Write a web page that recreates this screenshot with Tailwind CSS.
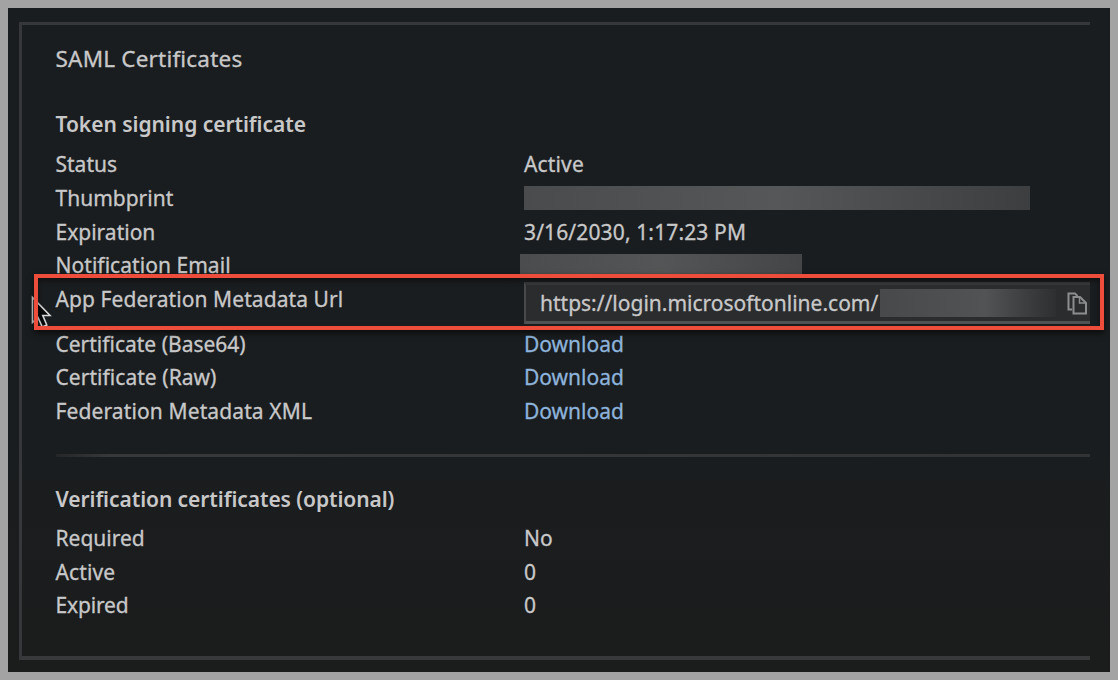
<!DOCTYPE html>
<html lang="en">
<head>
<meta charset="utf-8">
<title>SAML Certificates</title>
<script src="https://cdn.jsdelivr.net/npm/@tailwindcss/browser@4"></script>
</head>
<body class="w-[1118px] h-[680px] overflow-hidden bg-[#a3a3a3] p-2 font-['Noto_Sans','Open_Sans',sans-serif] text-[21px] text-[#c8c8c9] [-webkit-text-stroke:0.3px]">
<main class="relative h-[664px] w-[1102px] bg-linear-to-b from-[#1a1d1f] from-65% to-[#1b1c1c] pt-[14px] pl-[11px] pr-5">
  <section class="flex h-[638px] flex-col border-t-[3px] border-l-[3px] border-b-4 border-t-[#35373b] border-l-[#35373a] border-b-[#38393a] pl-[33.5px]">
    <h1 class="mt-[15px] h-[38px] text-[22.5px] leading-[38px] tracking-[0.2px]">SAML Certificates</h1>
    <h2 class="mt-[31px] h-[30px] text-[21px] font-semibold leading-[30px] tracking-[-0.04px] [-webkit-text-stroke:0px]">Token signing certificate</h2>

    <dl class="mt-[8px] grid grid-cols-[468.5px_1fr] grid-rows-[33.75px_33.75px_33.75px_33.75px_44.5px_33.75px_33.75px_33.75px] leading-[34.5px]">
      <dt>Status</dt><dd class="tracking-[0.15px]">Active</dd>
      <dt>Thumbprint</dt>
      <dd class="pt-[5px]"><div class="h-6 w-[506px] bg-linear-to-r from-[#4a4b4c] via-[#565758] to-[#3c3e40]"></div></dd>
      <dt>Expiration</dt><dd class="tracking-[0.13px]">3/16/2030, 1:17:23 PM</dd>
      <dt class="tracking-[0.05px]">Notification Email</dt>
      <dd class="pt-[6px]"><div class="-ml-1 h-6 w-[282px] bg-linear-to-r from-[#4b4c4d] via-[#545556] to-[#434546]"></div></dd>
      <dt class="tracking-[0.08px]">App Federation Metadata Url</dt>
      <dd class="flex h-[42px] items-center border-t-[3px] border-b-[3px] border-l-2 border-t-[#37383a] border-b-[#505152] border-l-[#48494a] bg-[#2b2c2e] pl-[14px]">
        <span class="w-[340px] overflow-hidden whitespace-nowrap">https://login.microsoftonline.com/</span>
        <span class="h-7 w-[176px] bg-linear-to-r from-[#48494a] via-[#525354] via-60% to-[#2e2f31]"></span>
        <svg class="ml-[9px] h-6 w-6" viewBox="0 0 24 24" fill="none" stroke="#8c8d8e" stroke-width="2" stroke-linejoin="miter">
          <path d="M7 18.5H3.5V2.5H10L12.5 5"/>
          <path d="M8.5 6H15L21 12V22.5H8.5Z"/>
          <path d="M14.5 6V12H20.5" stroke-width="1.5"/>
        </svg>
      </dd>
      <dt>Certificate (Base64)</dt><dd><a class="text-[#8db3db]">Download</a></dd>
      <dt class="tracking-[0.05px]">Certificate (Raw)</dt><dd><a class="text-[#8db3db]">Download</a></dd>
      <dt class="tracking-[0.12px]">Federation Metadata XML</dt><dd><a class="text-[#8db3db]">Download</a></dd>
    </dl>

    <hr class="mt-[26px] h-[3px] shrink-0 border-0 bg-linear-to-r from-[#242628] via-[#37383a] via-5% to-[#323335]">
    <h2 class="mt-[27px] h-[30px] text-[21px] font-semibold leading-[30px] tracking-[-0.07px] [-webkit-text-stroke:0px]">Verification certificates (optional)</h2>
    <dl class="mt-[7px] grid grid-cols-[468.5px_1fr] auto-rows-[33.75px] leading-[34.5px]">
      <dt>Required</dt><dd>No</dd>
      <dt class="tracking-[0.1px]">Active</dt><dd>0</dd>
      <dt class="tracking-[-0.15px]">Expired</dt><dd>0</dd>
    </dl>
  </section>

  <!-- mouse pointer, partly under the highlight frame -->
  <svg class="absolute left-[22px] top-[286px] h-[34px] w-[24px]" viewBox="0 0 24 34" fill="#08090a" stroke="#d8d8d8" stroke-width="1.6">
    <path d="M2.5 3.5V28.5L8 23.5L12.3 33L16.8 31L12.8 21.5H20Z"/>
  </svg>
  <div class="absolute left-[26px] top-[266px] h-[56px] w-[1070px] border-4 border-[#ef4d3c] shadow-[0_3px_6px_rgba(0,0,0,0.65),inset_0_3px_5px_rgba(0,0,0,0.45)]"></div>
</main>
</body>
</html>
